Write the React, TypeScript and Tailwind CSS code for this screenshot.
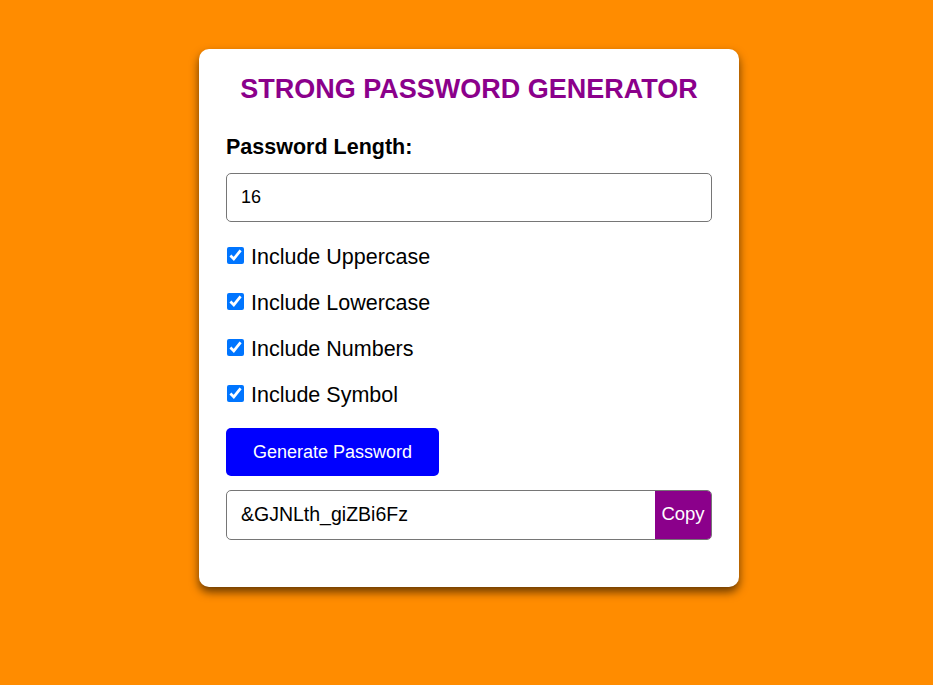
import { useState } from 'react'

export default function App() {
  const [length, setLength] = useState('16')
  const [opts, setOpts] = useState({ upper: true, lower: true, numbers: true, symbol: true })
  const [password, setPassword] = useState('&GJNLth_giZBi6Fz')

  const generate = () => {
    let chars = ''
    if (opts.upper) chars += 'ABCDEFGHIJKLMNOPQRSTUVWXYZ'
    if (opts.lower) chars += 'abcdefghijklmnopqrstuvwxyz'
    if (opts.numbers) chars += '0123456789'
    if (opts.symbol) chars += '!@#$%^&*_-+='
    if (!chars) return
    let out = ''
    for (let i = 0; i < Number(length); i++) out += chars[Math.floor(Math.random() * chars.length)]
    setPassword(out)
  }

  const rows: [keyof typeof opts, string][] = [
    ['upper', 'Include Uppercase'],
    ['lower', 'Include Lowercase'],
    ['numbers', 'Include Numbers'],
    ['symbol', 'Include Symbol'],
  ]

  return (
    <div className="min-h-screen bg-[#ff8c00] pt-[49px] pl-[5px] font-['Liberation_Sans',Arial,sans-serif]">
      <div className="w-[540px] mx-auto bg-white rounded-[10px] shadow-[0_5px_10px_rgba(0,0,0,0.6)] px-[27px] pt-[25px] pb-[47px]">
        <h1 className="text-center text-[27px] leading-[31px] font-bold text-[#8b008b]">STRONG PASSWORD GENERATOR</h1>
        <label className="block mt-[30px] text-[21.5px] leading-[24px] font-bold text-black">Password Length:</label>
        <input
          type="number"
          value={length}
          onChange={e => setLength(e.target.value)}
          className="block mt-[14px] w-full h-[49px] border border-[#767676] rounded-[5px] px-[14px] text-[18px] text-black outline-none"
        />
        <div className="mt-[22px] flex flex-col gap-[23px]">
          {rows.map(([key, text]) => (
            <label key={key} className="flex items-center h-[23px] text-[21.5px] text-black">
              <input
                type="checkbox"
                checked={opts[key]}
                onChange={() => setOpts({ ...opts, [key]: !opts[key] })}
                className="w-[17px] h-[17px] m-0 ml-[1px] accent-[#0075ff]"
              />
              <span className="ml-[7px] pt-[3px]">{text}</span>
            </label>
          ))}
        </div>
        <button
          onClick={generate}
          className="block mt-[23px] w-[213px] h-[48px] bg-[#0000ff] text-white text-[18px] rounded-[5px]"
        >
          Generate Password
        </button>
        <div className="mt-[14px] flex h-[50px] border border-[#767676] rounded-[5px] overflow-hidden">
          <input
            readOnly
            value={password}
            className="flex-1 min-w-0 px-[14px] text-[19.5px] text-black outline-none"
          />
          <button
            onClick={() => navigator.clipboard?.writeText(password)}
            className="w-[56px] pb-[2px] bg-[#8b008b] text-white text-[18.5px]"
          >
            Copy
          </button>
        </div>
      </div>
    </div>
  )
}
